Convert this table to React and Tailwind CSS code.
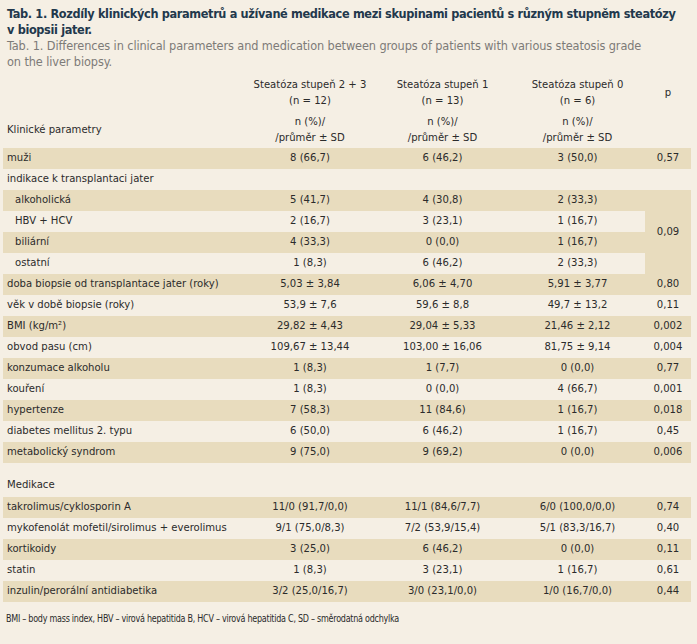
import React from 'react'

const COND = { fontFamily: '"Liberation Sans Narrow", "DejaVu Sans Condensed", "Liberation Sans", sans-serif' }
const BODY = { fontFamily: '"DejaVu Sans Condensed", "Noto Sans", "Liberation Sans", sans-serif' }

const rows = [
  { label: 'muži', v: ['8 (66,7)', '6 (46,2)', '3 (50,0)'], p: '0,57' },
  { label: 'indikace k transplantaci jater', v: ['', '', ''], p: '' },
  { label: 'alkoholická', sub: true, v: ['5 (41,7)', '4 (30,8)', '2 (33,3)'], p: '0,09', span: 4 },
  { label: 'HBV + HCV', sub: true, v: ['2 (16,7)', '3 (23,1)', '1 (16,7)'], skip: true },
  { label: 'biliární', sub: true, v: ['4 (33,3)', '0 (0,0)', '1 (16,7)'], skip: true },
  { label: 'ostatní', sub: true, v: ['1 (8,3)', '6 (46,2)', '2 (33,3)'], skip: true },
  { label: 'doba biopsie od transplantace jater (roky)', v: ['5,03 ± 3,84', '6,06 ± 4,70', '5,91 ± 3,77'], p: '0,80' },
  { label: 'věk v době biopsie (roky)', v: ['53,9 ± 7,6', '59,6 ± 8,8', '49,7 ± 13,2'], p: '0,11' },
  { label: 'BMI (kg/m²)', v: ['29,82 ± 4,43', '29,04 ± 5,33', '21,46 ± 2,12'], p: '0,002' },
  { label: 'obvod pasu (cm)', v: ['109,67 ± 13,44', '103,00 ± 16,06', '81,75 ± 9,14'], p: '0,004' },
  { label: 'konzumace alkoholu', v: ['1 (8,3)', '1 (7,7)', '0 (0,0)'], p: '0,77' },
  { label: 'kouření', v: ['1 (8,3)', '0 (0,0)', '4 (66,7)'], p: '0,001' },
  { label: 'hypertenze', v: ['7 (58,3)', '11 (84,6)', '1 (16,7)'], p: '0,018' },
  { label: 'diabetes mellitus 2. typu', v: ['6 (50,0)', '6 (46,2)', '1 (16,7)'], p: '0,45' },
  { label: 'metabolický syndrom', v: ['9 (75,0)', '9 (69,2)', '0 (0,0)'], p: '0,006' },
]

const meds = [
  { label: 'takrolimus/cyklosporin A', v: ['11/0 (91,7/0,0)', '11/1 (84,6/7,7)', '6/0 (100,0/0,0)'], p: '0,74' },
  { label: 'mykofenolát mofetil/sirolimus + everolimus', v: ['9/1 (75,0/8,3)', '7/2 (53,9/15,4)', '5/1 (83,3/16,7)'], p: '0,40' },
  { label: 'kortikoidy', v: ['3 (25,0)', '6 (46,2)', '0 (0,0)'], p: '0,11' },
  { label: 'statin', v: ['1 (8,3)', '3 (23,1)', '1 (16,7)'], p: '0,61' },
  { label: 'inzulin/perorální antidiabetika', v: ['3/2 (25,0/16,7)', '3/0 (23,1/0,0)', '1/0 (16,7/0,0)'], p: '0,44' },
]

function Row({ r, dark }) {
  const bg = dark ? 'bg-[#e8dcbe]' : ''
  return (
    <tr className="h-[21px]">
      <td className={`${bg} ${r.sub ? 'pl-[12px]' : 'pl-[4px]'} whitespace-nowrap`}>{r.label}</td>
      {r.v.map((x, i) => (
        <td key={i} className={`${bg} text-center whitespace-nowrap`}>{x}</td>
      ))}
      {!r.skip && (
        <td rowSpan={r.span || 1} className={`${r.span ? 'bg-[#e8dcbe]' : bg} text-center`}>{r.p}</td>
      )}
    </tr>
  )
}

export default function App() {
  return (
    <div className="w-[697px] h-[644px] bg-[#f5efe4] text-[#2b2b2b] overflow-hidden">
      <div className="px-[7px] pt-[6px] leading-[16px] whitespace-nowrap" style={COND}>
        <div className="font-bold text-[#22384c] text-[12.6px] tracking-[-0.35px]">
          Tab. 1. Rozdíly klinických parametrů a užívané medikace mezi skupinami pacientů s různým stupněm steatózy<br />
          v biopsii jater.
        </div>
        <div className="text-[#7d7b78] text-[12.6px] tracking-[-0.1px]">
          Tab. 1. Differences in clinical parameters and medication between groups of patients with various steatosis grade<br />
          on the liver biopsy.
        </div>
      </div>

      <table className="ml-[3px] mt-[5px] w-[688px] table-fixed border-collapse text-[11.2px]" style={BODY}>
        <colgroup>
          <col className="w-[242px]" />
          <col className="w-[130px]" />
          <col className="w-[135px]" />
          <col className="w-[135px]" />
          <col className="w-[46px]" />
        </colgroup>
        <thead>
          <tr className="h-[36px] leading-[16px]">
            <th className="font-normal"></th>
            <th className="font-normal text-center">Steatóza stupeň 2 + 3<br />(n = 12)</th>
            <th className="font-normal text-center">Steatóza stupeň 1<br />(n = 13)</th>
            <th className="font-normal text-center">Steatóza stupeň 0<br />(n = 6)</th>
            <th className="font-normal text-center">p</th>
          </tr>
          <tr className="h-[37px] leading-[16px]">
            <th className="font-normal text-left pl-[4px]">Klinické parametry</th>
            <th className="font-normal text-center">n (%)/<br />/průměr ± SD</th>
            <th className="font-normal text-center">n (%)/<br />/průměr ± SD</th>
            <th className="font-normal text-center">n (%)/<br />/průměr ± SD</th>
            <th></th>
          </tr>
        </thead>
        <tbody>
          {rows.map((r, i) => <Row key={r.label} r={r} dark={i % 2 === 0} />)}
          <tr className="h-[34px]">
            <td className="pl-[4px] align-bottom pb-[3px]">Medikace</td>
            <td></td><td></td><td></td><td></td>
          </tr>
          {meds.map((r, i) => <Row key={r.label} r={r} dark={i % 2 === 0} />)}
        </tbody>
      </table>

      <div className="px-[7px] pt-[9px] text-[10.5px] leading-[15px] tracking-[-0.3px] whitespace-nowrap origin-left scale-x-[0.85]" style={COND}>
        BMI – body mass index, HBV – virová hepatitida B, HCV – virová hepatitida C, SD – směrodatná odchylka
      </div>
    </div>
  )
}
